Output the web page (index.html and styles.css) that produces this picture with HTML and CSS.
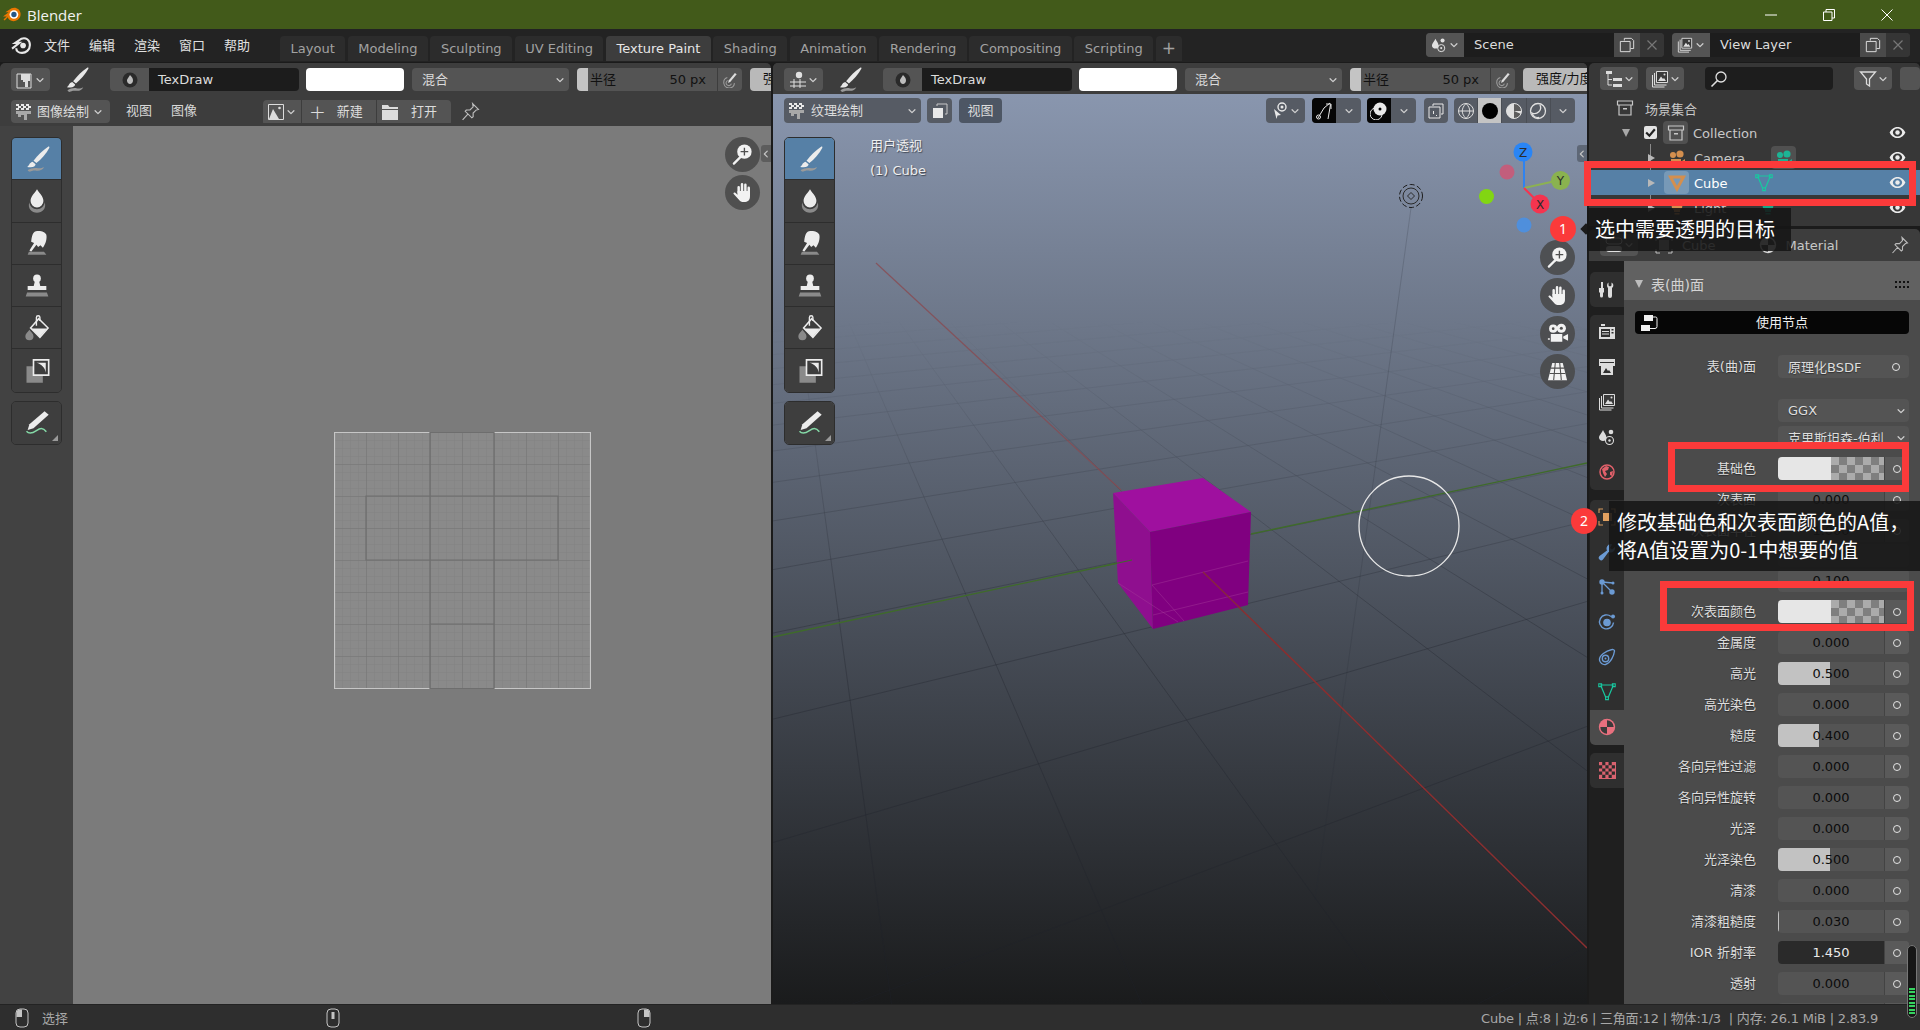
FILE: index.html
```html
<!DOCTYPE html>
<html lang="zh-CN">
<head>
    <meta charset="UTF-8">
    <title>Blender</title>
    <link rel="stylesheet" href="styles.css">
</head>
<body>
    <!-- icon sheet -->
    <svg class="icon-defs" xmlns="http://www.w3.org/2000/svg">
        <symbol id="i-brush" viewBox="0 0 24 24"><path d="M21.500 1.500c.8-.4 1.400.2 1 1C20 7.500 15.500 12 11.500 15.500L9 13.500C12.500 9 17 4.500 21.500 1.500z"/><path d="M8.200 14.300l2.600 2.200c-.3 2-2.500 3.200-7.300 2.300 2-1 1.500-3.500 4.700-4.500z"/><path fill="#9a9a9a" d="M4 21.500c2.500-1.500 5.500-2.200 8-1.700 2 .4 4.500 0 6-1-.8 2.500-4 3.600-6.500 3.200-2.500-.4-4.500.4-5.500 1-.8 0-1.700-.7-2-1.500z"/></symbol>
        <symbol id="i-drop" viewBox="0 0 24 24"><path d="M12 2c2 3.500 5.500 6 5.500 10a5.500 5.500 0 0 1-11 0C6.500 8 10 5.500 12 2z"/><path fill="#8a8a8a" d="M5.500 13c-2 5 2 9 6.500 9s8.500-4 6.500-9c-.3 3.500-3 6-6.500 6s-6.200-2.500-6.500-6z"/></symbol>
        <symbol id="i-smear" viewBox="0 0 24 24"><path d="M11 2c3-1 8 0 9 3 .7 3-.5 8-3 11l-2-2-2 1.500-1.500-2L7 19.500 5.500 18.500l4-6.500-2.500-1C7.500 7 8 3 11 2z"/><path fill="#8a8a8a" d="M5 19.500h13l2 2.500H4z"/></symbol>
        <symbol id="i-stamp" viewBox="0 0 24 24"><circle cx="12" cy="5.500" r="3.300"/><path d="M10 8.500h4l.8 3.500H20v3.500H4V12h5.200z"/><path fill="#8a8a8a" d="M3.500 17.500h17l1.200 3.500H2.300z"/></symbol>
        <symbol id="i-fill" viewBox="0 0 24 24"><path fill="none" stroke="currentColor" stroke-width="1.300" d="M13.500 4l8 8-7 8-8-8z"/><path d="M7 12.500h13.500L14.500 19.500z"/><path fill="none" stroke="currentColor" stroke-width="1.200" d="M11.500 10V3a1.500 1.500 0 0 1 3 0v3"/><path fill="#8a8a8a" d="M5.500 13.500c1.500 2.200 3.500 3.500 3.500 5.500a3.500 3.500 0 0 1-7 0c0-2 2-3.300 3.500-5.500z"/></symbol>
        <symbol id="i-mask" viewBox="0 0 24 24"><path fill="#8a8a8a" d="M3 8h14v14H3z"/><path fill="#3d3d3d" stroke="currentColor" stroke-width="1.400" d="M9 2.500h13v13H9z"/><path d="M11.500 5h8v8.500c-.5-4-3.500-7.500-8-8.500z"/></symbol>
        <symbol id="i-annotate" viewBox="0 0 24 24"><path d="M18.500 2l3.500 3L9 16.500l-5 1.500 1.500-5z"/><path fill="none" stroke="#84d8a6" stroke-width="1.300" d="M3 19c2.500 3 5.500 1.500 8.500-.5s5.500-3 8.500 1"/></symbol>
        <symbol id="i-zoom" viewBox="0 0 24 24"><path fill="none" stroke="currentColor" stroke-width="2.400" stroke-linecap="round" d="M3 21.500l6.500-6.500"/><circle cx="14" cy="9" r="7.500"/><path fill="none" stroke="#4f4f4f" stroke-width="1.400" d="M14 5v8M10 9h8"/></symbol>
        <symbol id="i-hand" viewBox="0 0 24 24"><path fill="none" stroke="currentColor" stroke-width="2.600" stroke-linecap="round" d="M8 12V6.500M11.500 11V3.500M15 11V4M18.500 12.500V7"/><path d="M6.800 10.500h13v6c0 3.500-2.500 5.500-6 5.500-3 0-4.500-1-6-3l-5-5.500c-.8-1.200.7-2.200 1.700-1.200l2.300 2z"/></symbol>
        <symbol id="i-camera" viewBox="0 0 24 24"><circle cx="7.500" cy="7" r="4.300"/><circle cx="16" cy="6.500" r="4.800"/><circle cx="7.500" cy="7" r="1.400" fill="#4f4f4f"/><circle cx="16" cy="6.500" r="1.600" fill="#4f4f4f"/><path d="M5 12.500h12v8H5zM18 15l5-2.500v7L18 17zM2 17h2v1.500H2z"/></symbol>
        <symbol id="i-floor" viewBox="0 0 24 24"><path d="M6.500 3h11L22 21H2z"/><path fill="none" stroke="#4f4f4f" stroke-width="1.100" d="M5 8.500h14M3.700 14h16.600M9.700 3L8 21M14.300 3L16 21"/></symbol>
        <symbol id="i-chev" viewBox="0 0 12 12"><path fill="none" stroke="currentColor" stroke-width="1.500" stroke-linecap="round" stroke-linejoin="round" d="M2.500 4.500L6 8l3.500-3.500"/></symbol>
        <symbol id="i-paintmode" viewBox="0 0 18 18"><path fill="none" stroke="currentColor" stroke-width="1" d="M1 3h14v14H1z"/><path d="M5 3h9v7h-2v6H9v-5H7v-2H5z"/></symbol>
        <symbol id="i-checkmode" viewBox="0 0 18 18"><path fill="#e8e8e8" d="M1 1h3v2H1zm5 0h3v2H6zm5 0h3v2h-3zM3 3h3v2H3zm5 0h3v2H8zm5 0h3v2h-3zM1 5h3v2H1zm5 0h3v2H6zm5 0h3v2h-3z"/><path fill="#a8a8a8" d="M1 8h15v3h-4v6H9v-5H6v2H3v-3H1z"/></symbol>
        <symbol id="i-imgsmall" viewBox="0 0 18 18"><path fill="none" stroke="currentColor" d="M1.500 1.500h15v15h-15z"/><path d="M6 6l6 10H2z"/><circle cx="12.500" cy="5" r="1.300"/></symbol>
        <symbol id="i-folder" viewBox="0 0 18 18"><path d="M1 2h6l1.500 2H17v2H1zM1 7h16v10H1z"/></symbol>
        <symbol id="i-pin" viewBox="0 0 18 18"><path fill="none" stroke="currentColor" stroke-width="1.100" d="M11 1.500l5.500 5.500-2 .5-3 3 0 3.500-1.200 1L4 8.800l1-1.200h3.500l3-3zM6.500 11.500L1.500 17"/></symbol>
        <symbol id="i-pen" viewBox="0 0 18 18"><path d="M14.500 1l2 1.500L9.500 11 7 12.500l.5-3z"/><path fill="none" stroke="#9a9a9a" stroke-width="1.200" d="M6 6.300A6 6 0 1 0 14 12.500M6.500 9.500A3 3 0 1 0 10.500 13"/></symbol>
        <symbol id="i-disc" viewBox="0 0 16 16"><circle cx="8" cy="8" r="7.500" fill="#2a2a2a"/><path fill="#bdbdbd" d="M8 3c2 2 3 3.500 3 5.500S9.500 12 8 12s-3-1.500-3-3.500C5 7 6.500 5.500 8 3z"/></symbol>
        <symbol id="i-scene" viewBox="0 0 18 18"><path d="M5 2c1 2.500 3.500 5 3.500 7.500S7 13 5 13 1 11.500 1 9.500 4 4.500 5 2z"/><circle cx="13" cy="4" r="2.300"/><circle cx="11.500" cy="12.500" r="4" fill="none" stroke="currentColor" stroke-width="1.100"/><circle cx="11.500" cy="12.500" r="1.200"/></symbol>
        <symbol id="i-layers" viewBox="0 0 18 18"><path fill="none" stroke="currentColor" stroke-width="1" d="M1.500 5v12h12M3.500 3v12h12"/><path fill="#3a3a3a" stroke="currentColor" d="M5.500 1.500h11v11h-11z"/><path d="M7 11l3-4.500 2 2.500 1-1 2 3z"/><circle cx="13.500" cy="4.500" r="1"/></symbol>
        <symbol id="i-copy" viewBox="0 0 18 18"><path fill="none" stroke="currentColor" stroke-width="1.100" d="M6 4V1.500h8l2.500 2.500v9H13M1.500 5h11v11.500h-11z"/></symbol>
        <symbol id="i-x" viewBox="0 0 12 12"><path fill="none" stroke="currentColor" stroke-width="1.200" d="M1.500 1.500l9 9M10.500 1.500l-9 9"/></symbol>
        <symbol id="i-tree" viewBox="0 0 18 18"><path d="M1 1h6v3H1zM8 8h9v3H8zM8 14h9v3H8z"/><path fill="none" stroke="currentColor" d="M3 4v11h4M3 9.500h4"/></symbol>
        <symbol id="i-search" viewBox="0 0 18 18"><circle cx="11" cy="7" r="5" fill="none" stroke="currentColor" stroke-width="1.300"/><path fill="none" stroke="currentColor" stroke-width="1.600" d="M7.500 10.500l-6 6"/></symbol>
        <symbol id="i-filter" viewBox="0 0 18 18"><path fill="none" stroke="currentColor" stroke-width="1.300" d="M1.500 2h15l-6 7v7l-3-2V9z"/></symbol>
        <symbol id="i-eye" viewBox="0 0 18 14"><path d="M9 1c4 0 7 2.700 8.500 6C16 10.300 13 13 9 13s-7-2.700-8.500-6C2 3.700 5 1 9 1zm0 1.600C6.200 2.600 4 4.800 4 7s2.200 4.400 5 4.400 5-2.200 5-4.400-2.200-4.400-5-4.400z"/><circle cx="9" cy="7" r="2.400"/></symbol>
        <symbol id="i-box" viewBox="0 0 18 18"><path fill="none" stroke="currentColor" stroke-width="1.200" d="M1.500 2h15v4h-15zM3 6v10h12V6"/><path d="M7 9h4v1.400H7z"/></symbol>
        <symbol id="i-cam-o" viewBox="0 0 18 18"><circle cx="5" cy="6" r="3"/><circle cx="12" cy="5" r="3.600"/><path d="M3 10h10v6H3zM14 12l3-2v6l-3-2z"/></symbol>
        <symbol id="i-cube-o" viewBox="0 0 18 18"><path fill="none" stroke="currentColor" stroke-width="3" d="M2.500 3h13L9 15z"/></symbol>
        <symbol id="i-mesh" viewBox="0 0 18 18"><path fill="none" stroke="currentColor" stroke-width="1.200" d="M2 2h14M3 3l5 12M15 3l-5 12"/><path fill="none" stroke="currentColor" stroke-width="1.100" d="M.8.8h2.800v2.800H.8zM14.400.8h2.800v2.800h-2.800zM7.600 13.800h2.800v2.800H7.600z"/></symbol>
        <symbol id="i-light-o" viewBox="0 0 18 18"><path d="M9 1a5.500 5.500 0 0 1 3 10v2H6v-2A5.500 5.500 0 0 1 9 1zM6.500 14h5v1.500h-5z"/></symbol>
        <symbol id="i-tools" viewBox="0 0 18 18"><path d="M3 1h2v6h1v4l-1 1v3a1.500 1.500 0 0 1-3 0v-3l-1-1V7h2z"/><path d="M10.500 1.500v3l1.500 1 1.500-1v-3c2 .8 2.500 3.500 1 5l-.5.500V15a2 2 0 0 1-4 0V7c-1.500-1.500-1-4.700.5-5.500z"/></symbol>
        <symbol id="i-render" viewBox="0 0 18 18"><path d="M1 4h16v12H1zM3 1h4v2H3z"/><path fill="#2f2f2f" d="M3 6h9v8H3zM13.500 6h2v1.500h-2zM13.500 9h2v1.500h-2z"/><path d="M4 8h7v1H4zM4 10.500h7v1H4z"/></symbol>
        <symbol id="i-output" viewBox="0 0 18 18"><path d="M1 1h16v5h-1v-2H2v2H1z"/><path d="M1 5h16v3H1z"/><path d="M3 7h12v10H3z"/><path fill="#2f2f2f" d="M5 15l3-5 2 3 1-1 2 3z"/></symbol>
        <symbol id="i-world" viewBox="0 0 18 18"><circle cx="9" cy="9" r="7" fill="none" stroke="currentColor" stroke-width="1.500"/><path d="M4 6l4-3 3 1-1 3-3 1 2 3-2 3-2-4zM12 9l3-1-1 5-2-1z"/></symbol>
        <symbol id="i-object" viewBox="0 0 18 18"><path fill="none" stroke="#d89a5c" stroke-width="1.100" d="M1 5V1h4M13 1h4v4M17 13v4h-4M5 17H1v-4"/><path fill="#e0a060" d="M5 5h9v8H5z"/></symbol>
        <symbol id="i-wrench" viewBox="0 0 18 18"><path d="M13 1a4.500 4.500 0 0 0-4 6.500L1.500 13a2.400 2.400 0 0 0 3.500 3.500L10.500 9A4.500 4.500 0 0 0 17 4l-3 2.500L12 5l2-3.500c-.4-.3-.6-.5-1-.5z"/></symbol>
        <symbol id="i-particle" viewBox="0 0 18 18"><circle cx="4" cy="4" r="2.700"/><circle cx="15" cy="5" r="1.500"/><circle cx="14" cy="14" r="2.700"/><circle cx="4" cy="15" r="1.500"/><path fill="none" stroke="currentColor" stroke-width="1.300" d="M4 4v11M4 4l10 10M4 4l11 1"/></symbol>
        <symbol id="i-physics" viewBox="0 0 18 18"><path fill="none" stroke="currentColor" stroke-width="1.400" d="M13 3.500a7 7 0 1 0 2.500 6"/><circle cx="9" cy="9.500" r="3.800"/><circle cx="15" cy="3.500" r="2"/></symbol>
        <symbol id="i-constraint" viewBox="0 0 18 18"><path fill="none" stroke="currentColor" stroke-width="1.400" d="M14 1.500C8 3 1 7 1.500 12c.5 3 3 5 6 4.500C13 15 16 7 16.500 3c0-1-1.500-1.800-2.500-1.500z"/><circle cx="7.500" cy="10.500" r="3.200" fill="none" stroke="currentColor" stroke-width="1.400"/><circle cx="7.500" cy="10.500" r="1"/></symbol>
        <symbol id="i-material" viewBox="0 0 18 18"><circle cx="9" cy="9" r="8.200"/><path fill="#3a3a3a" d="M9 9V2.300A6.700 6.700 0 0 1 15.700 9zM9 9v6.700A6.700 6.700 0 0 1 2.300 9z"/></symbol>
        <symbol id="i-checker" viewBox="0 0 16 16"><path fill="#d9626f" d="M0 0h16v16H0z"/><path fill="#2b2b2b" d="M3 0h3v3H3zm6 0h3v3H9zM0 3h3v3H0zm6 0h3v3H6zm6 0h3v3h-3zM3 6h3v3H3zm6 0h3v3H9zM0 9h3v3H0zm6 0h3v3H6zm6 0h3v3h-3zM3 12h3v3H3zm6 0h3v3H9z"/></symbol>
        <symbol id="i-nodes" viewBox="0 0 18 18"><path d="M4 1h9v6H4zM1 11h9v6H1z"/><path fill="none" stroke="currentColor" d="M13 3h2.500a1.500 1.500 0 0 1 1.500 1.500v8a2 2 0 0 1-2 2h-5"/></symbol>
        <symbol id="i-mouse-l" viewBox="0 0 14 20"><rect x="1" y="1" width="12" height="18" rx="4" fill="none" stroke="currentColor"/><path fill="#c4c4c4" d="M1.500 9V5a3.500 3.500 0 0 1 3.500-3.500h2V9z"/></symbol>
        <symbol id="i-mouse-m" viewBox="0 0 14 20"><rect x="1" y="1" width="12" height="18" rx="4" fill="none" stroke="currentColor"/><rect x="5.500" y="4" width="3" height="7" fill="#c4c4c4"/></symbol>
        <symbol id="i-mouse-r" viewBox="0 0 14 20"><rect x="1" y="1" width="12" height="18" rx="4" fill="none" stroke="currentColor"/><path fill="#c4c4c4" d="M12.500 9V5A3.500 3.500 0 0 0 9 1.500H7V9z"/></symbol>
    </svg>

    <div class="titlebar">
        <svg class="title-logo" viewBox="0 0 20 20"><path fill="#ea7600" d="M0 12l6-4.500H2.500L9 3.500C13 1.500 18 4 18.500 9c.4 5-3.500 8-7.500 8-3 0-5.500-1.500-6-4l-3 3c-1 .5-1.600-.500-1-1.200L4 12z"/><circle cx="11.500" cy="10" r="4.600" fill="#fff"/><circle cx="11.500" cy="10" r="2.800" fill="#265787"/></svg>
        <span class="title-text">Blender</span>
        <div class="win-controls">
            <svg viewBox="0 0 12 12"><path d="M0 6h12" stroke="#fff"/></svg>
            <svg viewBox="0 0 12 12"><path d="M.5 3h8.500v8.500H.5zM3 3V.5h8.500V9H9" fill="none" stroke="#fff"/></svg>
            <svg viewBox="0 0 12 12"><path d="M.5.5l11 11M11.500.5l-11 11" stroke="#fff"/></svg>
        </div>
    </div>

    <div class="topbar">
        <svg class="menu-logo" viewBox="0 0 20 20"><path fill="none" stroke="#e8e8e8" stroke-width="2" d="M1 13l7-5.500H4L10 3.500c4-1.500 8 1 8 6s-4 7.500-7.500 7.500-5.500-2-5.500-4.500"/><circle cx="11.500" cy="10" r="2.700" fill="#e8e8e8"/></svg>
        <nav class="menu">
            <span>文件</span><span>编辑</span><span>渲染</span><span>窗口</span><span>帮助</span>
        </nav>
        <div class="tabs">
            <span class="tab">Layout</span>
            <span class="tab">Modeling</span>
            <span class="tab">Sculpting</span>
            <span class="tab">UV Editing</span>
            <span class="tab active">Texture Paint</span>
            <span class="tab">Shading</span>
            <span class="tab">Animation</span>
            <span class="tab">Rendering</span>
            <span class="tab">Compositing</span>
            <span class="tab">Scripting</span>
            <span class="tab plus">+</span>
        </div>
        <div class="selector first">
            <div class="sel-icon"><svg class="ic16"><use href="#i-scene"/></svg><svg class="chev"><use href="#i-chev"/></svg></div>
            <div class="sel-input">Scene</div>
            <div class="sel-copy"><svg class="ic16"><use href="#i-copy"/></svg></div>
            <div class="sel-x"><svg class="ic12"><use href="#i-x"/></svg></div>
        </div>
        <div class="selector">
            <div class="sel-icon"><svg class="ic16"><use href="#i-layers"/></svg><svg class="chev"><use href="#i-chev"/></svg></div>
            <div class="sel-input">View Layer</div>
            <div class="sel-copy"><svg class="ic16"><use href="#i-copy"/></svg></div>
            <div class="sel-x"><svg class="ic12"><use href="#i-x"/></svg></div>
        </div>
    </div>

    <div class="main">
        <!-- image editor -->
        <section class="editor image-editor">
            <div class="tool-header">
                <div class="btn mode"><svg class="ic18"><use href="#i-paintmode"/></svg><svg class="chev"><use href="#i-chev"/></svg></div>
                <svg class="brush-ic"><use href="#i-brush"/></svg>
                <div class="datablock"><div class="db-icon"><svg class="ic16"><use href="#i-disc"/></svg></div><div class="db-input">TexDraw</div></div>
                <div class="swatch"></div>
                <div class="btn blend"><span>混合</span><svg class="chev"><use href="#i-chev"/></svg></div>
                <div class="radius"><i class="radius-fill"></i><span>半径</span><span class="radius-val">50 px</span></div>
                <div class="btn pen"><svg class="ic16"><use href="#i-pen"/></svg></div>
                <div class="strength">强度/力度</div>
            </div>
            <div class="image-row">
                <div class="btn img-mode"><svg class="ic18"><use href="#i-checkmode"/></svg><span>图像绘制</span><svg class="chev"><use href="#i-chev"/></svg></div>
                <span class="menu-text view">视图</span>
                <span class="menu-text img">图像</span>
                <div class="img-group">
                    <div class="btn g-img"><svg class="ic18"><use href="#i-imgsmall"/></svg><svg class="chev"><use href="#i-chev"/></svg></div>
                    <div class="btn g-new"><span class="plus-sign">+</span><span>新建</span></div>
                    <div class="btn g-open"><svg class="ic18"><use href="#i-folder"/></svg><span>打开</span></div>
                </div>
                <svg class="pin-ic"><use href="#i-pin"/></svg>
            </div>
            <div class="image-body">
                <div class="shelf-col">
                    <div class="shelf">
                        <div class="tool active"><svg><use href="#i-brush"/></svg></div>
                        <div class="tool"><svg><use href="#i-drop"/></svg></div>
                        <div class="tool"><svg><use href="#i-smear"/></svg></div>
                        <div class="tool"><svg><use href="#i-stamp"/></svg></div>
                        <div class="tool"><svg><use href="#i-fill"/></svg></div>
                        <div class="tool"><svg><use href="#i-mask"/></svg></div>
                    </div>
                    <div class="shelf single"><div class="tool"><svg><use href="#i-annotate"/></svg><i class="corner"></i></div></div>
                </div>
                <div class="image-canvas">
                    <svg class="uv" viewBox="0 0 257 257">
                        <defs>
                            <pattern id="minor" width="8" height="8" patternUnits="userSpaceOnUse"><path d="M8 0H0V8" fill="none" stroke="#818181" stroke-width="1"/></pattern>
                            <pattern id="major" width="32" height="32" patternUnits="userSpaceOnUse"><path d="M32 0H0V32" fill="none" stroke="#747474" stroke-width="1"/></pattern>
                        </defs>
                        <rect width="257" height="257" fill="#8a8a8a"/>
                        <rect width="257" height="257" fill="url(#minor)"/>
                        <rect width="257" height="257" fill="url(#major)"/>
                        <path d="M96 .5H.5v256H96M160 .5h96.500v256H160" fill="none" stroke="#c6c6c6" stroke-width="1.200"/>
                        <path d="M96 .5h64v256H96zM32 64h192v64H32zM96 192h64" fill="none" stroke="#6e6e6e" stroke-width="1.200"/>
                    </svg>
                    <div class="nav-gizmos">
                        <div class="nav-btn"><svg><use href="#i-zoom"/></svg></div>
                        <div class="nav-btn"><svg><use href="#i-hand"/></svg></div>
                    </div>
                    <div class="side-arrow"><svg class="ic12"><use href="#i-chev"/></svg></div>
                </div>
            </div>
        </section>

        <!-- 3d viewport -->
        <section class="editor viewport">
            <div class="tool-header">
                <div class="btn mode"><svg class="ic18" viewBox="0 0 18 18"><path d="M1 11h16M1 15h16M5 8v9M11 8v9" stroke="#e0e0e0" fill="none"/><circle cx="10" cy="4" r="3.200" fill="#e0e0e0"/></svg><svg class="chev"><use href="#i-chev"/></svg></div>
                <svg class="brush-ic"><use href="#i-brush"/></svg>
                <div class="datablock"><div class="db-icon"><svg class="ic16"><use href="#i-disc"/></svg></div><div class="db-input">TexDraw</div></div>
                <div class="swatch"></div>
                <div class="btn blend"><span>混合</span><svg class="chev"><use href="#i-chev"/></svg></div>
                <div class="radius"><i class="radius-fill"></i><span>半径</span><span class="radius-val">50 px</span></div>
                <div class="btn pen"><svg class="ic16"><use href="#i-pen"/></svg></div>
                <div class="strength">强度/力度</div>
            </div>
            <div class="view-body">
                <svg class="scene" id="scene" viewBox="773 94 814 910">
                    <defs>
                        <linearGradient id="gridFade" gradientUnits="userSpaceOnUse" x1="0" y1="320" x2="0" y2="640">
                            <stop offset="0" stop-color="#000"/><stop offset="1" stop-color="#fff"/>
                        </linearGradient>
                        <mask id="gridMask" maskUnits="userSpaceOnUse" x="773" y="94" width="814" height="910"><rect x="773" y="94" width="814" height="910" fill="url(#gridFade)"/></mask>
                    </defs>
                    <g id="floor" mask="url(#gridMask)" stroke="#20242c" stroke-opacity=".34" stroke-width="1"></g>
                    <path d="M1411 208L1350 650L1315 900" fill="none" stroke="#2a2e36" stroke-opacity=".2"/>
                    <path d="M876 263L1121 490" stroke="#8a4a50" stroke-width="1.200" stroke-opacity=".8"/>
                    <path d="M1203 572L1587 948" stroke="#8b2f30" stroke-width="1.500"/>
                    <path d="M773 637L1132 560" stroke="#3f6b2a" stroke-width="1.300"/>
                    <path d="M1251 534L1587 463" stroke="#3f6b2a" stroke-width="1.300"/>
                    <path d="M1113 493L1203 478L1251 512L1150 532z" fill="#9f109f"/>
                    <path d="M1113 493L1150 532L1153 629L1118 583z" fill="#8f0f8f"/>
                    <path d="M1150 532L1251 512L1248 605L1153 629z" fill="#800080"/>
                    <path d="M1152 585L1248 561M1153 615L1248 592M1118 583L1178 622M1152 585L1184 621" stroke="#a33a9a" stroke-opacity=".45"/>
                    <path d="M1203 572L1240 608" stroke="#8b2f30" stroke-width="1.500" opacity=".8"/>
                    <path d="M1132 560L1104 566" stroke="#3f6b2a"/>
                    <circle cx="1409" cy="526" r="50" fill="none" stroke="#e8e8e8" stroke-width="1.300"/>
                    <circle cx="1411" cy="196" r="11.500" fill="none" stroke="#1c1c1c" stroke-dasharray="5 2.500"/>
                    <circle cx="1411" cy="196" r="8" fill="none" stroke="#2a2a2a"/>
                    <path d="M1411 192.500l3.500 3.500-3.500 3.500-3.500-3.500z" fill="none" stroke="#2a2a2a"/>
                    <path d="M1524 152V188" stroke="#2f83f0" stroke-width="2"/>
                    <path d="M1524 188L1560 180" stroke="#8cb152" stroke-width="2"/>
                    <path d="M1524 188L1540 204" stroke="#f5344f" stroke-width="2"/>
                    <circle cx="1507" cy="172" r="7.500" fill="#c25e7c"/>
                    <circle cx="1486.500" cy="196.500" r="7.500" fill="#82d612"/>
                    <circle cx="1524" cy="225" r="7.500" fill="#4f8fdc"/>
                    <circle cx="1523" cy="152" r="9.500" fill="#2a85f5"/>
                    <circle cx="1560.500" cy="180.500" r="9.500" fill="#8ab24f"/>
                    <circle cx="1540" cy="204" r="9.500" fill="#f5344f"/>
                    <text class="axis" x="1523" y="156.500">Z</text>
                    <text class="axis" x="1560.500" y="185">Y</text>
                    <text class="axis" x="1540" y="208.500">X</text>
                </svg>
                <div class="view-header">
                    <div class="vbtn v-mode"><svg class="ic18"><use href="#i-checkmode"/></svg><span>纹理绘制</span><svg class="chev"><use href="#i-chev"/></svg></div>
                    <div class="vbtn v-small"><svg class="ic16" viewBox="0 0 16 16"><path fill="#e8e8e8" d="M1 5h10v10H1z"/><path fill="none" stroke="#c8c8c8" d="M5 3V1h10v10h-2"/></svg></div>
                    <div class="vbtn v-view">视图</div>
                    <div class="vbtn v-select"><svg class="ic18" viewBox="0 0 18 18"><circle cx="11" cy="5" r="4" fill="none" stroke="#e8e8e8" stroke-width="1.400"/><circle cx="11" cy="5" r="1.500" fill="#e8e8e8"/><path d="M3 7l7 6-3.500.5L5.500 17z" fill="#e8e8e8"/></svg><svg class="chev"><use href="#i-chev"/></svg></div>
                    <div class="v-pair overlay">
                        <div class="v-black"><svg class="ic18" viewBox="0 0 18 18"><path d="M15 1L9 6 3 16" fill="none" stroke="#e8e8e8"/><circle cx="3.500" cy="15" r="2" fill="none" stroke="#e8e8e8"/><path d="M11 2h5v5M15.500 2.500L13 17" fill="none" stroke="#e8e8e8"/></svg></div>
                        <div class="v-arrow"><svg class="chev"><use href="#i-chev"/></svg></div>
                    </div>
                    <div class="v-pair shading">
                        <div class="v-black"><svg class="ic18" viewBox="0 0 18 18"><circle cx="10" cy="7" r="6.500" fill="#e8e8e8"/><circle cx="10" cy="7" r="1.500" fill="#000"/><path d="M5 6a6 6 0 1 0 7 7" fill="none" stroke="#e8e8e8"/></svg></div>
                        <div class="v-arrow"><svg class="chev"><use href="#i-chev"/></svg></div>
                    </div>
                    <div class="vbtn v-xray"><svg class="ic16" viewBox="0 0 16 16"><path fill="none" stroke="#e8e8e8" d="M5 3V1h10v10h-2M1 4h11v11H1z"/><path d="M5 8h1v3H5zM8 12h1v1H8z" fill="#e8e8e8"/></svg></div>
                    <div class="shade-group">
                        <div class="shade"><svg class="ic18" viewBox="0 0 18 18"><circle cx="9" cy="9" r="7.500" fill="none" stroke="#ddd"/><path d="M1.500 9h15M9 1.500c-5 5-5 10 0 15M9 1.500c5 5 5 10 0 15" fill="none" stroke="#ddd"/></svg></div>
                        <div class="shade on"><svg class="ic18" viewBox="0 0 18 18"><circle cx="9" cy="9" r="8" fill="#000"/></svg></div>
                        <div class="shade"><svg class="ic18" viewBox="0 0 18 18"><circle cx="9" cy="9" r="7.500" fill="#e0e0e0"/><path d="M9 9V1.500a7.500 7.500 0 0 1 7.500 7.500zM9 9l7 3a7.500 7.500 0 0 1-7 4.500z" fill="#5d5d5d"/><circle cx="9" cy="9" r="7.500" fill="none" stroke="#e0e0e0"/></svg></div>
                        <div class="shade"><svg class="ic18" viewBox="0 0 18 18"><circle cx="9" cy="9" r="7.500" fill="none" stroke="#e0e0e0" stroke-width="1.300"/><path d="M11 3a6 6 0 0 1-8 8c1 3 4 5 7 4.500" fill="none" stroke="#e0e0e0" stroke-width="1.300"/></svg></div>
                        <div class="shade"><svg class="chev"><use href="#i-chev"/></svg></div>
                    </div>
                </div>
                <div class="shelf-col in-view">
                    <div class="shelf">
                        <div class="tool active"><svg><use href="#i-brush"/></svg></div>
                        <div class="tool"><svg><use href="#i-drop"/></svg></div>
                        <div class="tool"><svg><use href="#i-smear"/></svg></div>
                        <div class="tool"><svg><use href="#i-stamp"/></svg></div>
                        <div class="tool"><svg><use href="#i-fill"/></svg></div>
                        <div class="tool"><svg><use href="#i-mask"/></svg></div>
                    </div>
                    <div class="shelf single"><div class="tool"><svg><use href="#i-annotate"/></svg><i class="corner"></i></div></div>
                </div>
                <div class="view-info"><div>用户透视</div><div>(1) Cube</div></div>
                <div class="nav-gizmos view-nav">
                    <div class="nav-btn"><svg><use href="#i-zoom"/></svg></div>
                    <div class="nav-btn"><svg><use href="#i-hand"/></svg></div>
                    <div class="nav-btn"><svg><use href="#i-camera"/></svg></div>
                    <div class="nav-btn"><svg><use href="#i-floor"/></svg></div>
                </div>
                <div class="side-arrow view-arrow"><svg class="ic12"><use href="#i-chev"/></svg></div>
            </div>
        </section>

        <!-- outliner + properties -->
        <div class="right-col">
            <section class="editor outliner">
                <div class="ol-header">
                    <div class="btn ol-btn"><svg class="ic18"><use href="#i-tree"/></svg><svg class="chev"><use href="#i-chev"/></svg></div>
                    <div class="btn ol-btn second"><svg class="ic18"><use href="#i-layers"/></svg><svg class="chev"><use href="#i-chev"/></svg></div>
                    <div class="ol-search"><svg class="ic18"><use href="#i-search"/></svg></div>
                    <div class="btn ol-btn"><svg class="ic18"><use href="#i-filter"/></svg><svg class="chev"><use href="#i-chev"/></svg></div>
                    <div class="btn ol-stub"></div>
                </div>
                <div class="ol-tree">
                    <i class="tree-line"></i>
                    <div class="ol-row root"><svg class="ic18"><use href="#i-box"/></svg><span class="ol-name">场景集合</span></div>
                    <div class="ol-row coll">
                        <i class="tri-down"></i>
                        <span class="check"><svg viewBox="0 0 12 12"><path d="M2 6l3 3 5-6" fill="none" stroke="#222" stroke-width="2"/></svg></span>
                        <span class="ol-icon on"><svg class="ic18"><use href="#i-box"/></svg></span>
                        <span class="ol-name">Collection</span>
                        <svg class="eye"><use href="#i-eye"/></svg>
                    </div>
                    <div class="ol-row obj">
                        <i class="tri-right"></i>
                        <span class="ol-icon orange"><svg class="ic18"><use href="#i-cam-o"/></svg></span>
                        <span class="ol-name">Camera</span>
                        <span class="ol-data cam"><svg class="ic18"><use href="#i-cam-o"/></svg></span>
                        <svg class="eye"><use href="#i-eye"/></svg>
                    </div>
                    <div class="ol-row obj selected">
                        <i class="tri-right"></i>
                        <span class="ol-icon orange lit"><svg class="ic18"><use href="#i-cube-o"/></svg></span>
                        <span class="ol-name">Cube</span>
                        <svg class="ic18 mesh-ic"><use href="#i-mesh"/></svg>
                        <svg class="eye"><use href="#i-eye"/></svg>
                    </div>
                    <div class="ol-row obj">
                        <i class="tri-right"></i>
                        <span class="ol-icon orange"><svg class="ic18"><use href="#i-light-o"/></svg></span>
                        <span class="ol-name">Light</span>
                        <svg class="ic18 light-ic"><use href="#i-light-o"/></svg>
                        <svg class="eye"><use href="#i-eye"/></svg>
                    </div>
                </div>
            </section>

            <section class="editor properties">
                <div class="prop-header">
                    <div class="btn prop-type"><svg class="ic18" viewBox="0 0 18 18"><rect x="1" y="2" width="16" height="6" rx="3" fill="none" stroke="#e0e0e0"/><rect x="1" y="10" width="16" height="6" rx="3" fill="#e0e0e0"/></svg><svg class="chev"><use href="#i-chev"/></svg></div>
                    <svg class="ic18 crumb-obj" viewBox="0 0 18 18"><path fill="none" stroke="#c0c0c0" d="M1 5V1h4M13 1h4v4M17 13v4h-4M5 17H1v-4"/><path fill="#9a9a9a" d="M4 4h10v10H4z"/></svg>
                    <span class="crumb">Cube</span>
                    <svg class="ic18 crumb-mat"><use href="#i-material"/></svg>
                    <span class="crumb">Material</span>
                    <svg class="ic18 crumb-pin"><use href="#i-pin"/></svg>
                </div>
                <div class="prop-body">
                    <div class="prop-nav">
                        <div class="nav-group"><div class="prop-tab white"><svg><use href="#i-tools"/></svg></div></div>
                        <div class="nav-group">
                            <div class="prop-tab white"><svg><use href="#i-render"/></svg></div>
                            <div class="prop-tab white"><svg><use href="#i-output"/></svg></div>
                            <div class="prop-tab white"><svg><use href="#i-layers"/></svg></div>
                            <div class="prop-tab white"><svg><use href="#i-scene"/></svg></div>
                            <div class="prop-tab red"><svg><use href="#i-world"/></svg></div>
                        </div>
                        <div class="nav-group">
                            <div class="prop-tab"><svg><use href="#i-object"/></svg></div>
                            <div class="prop-tab blue"><svg><use href="#i-wrench"/></svg></div>
                            <div class="prop-tab blue"><svg><use href="#i-particle"/></svg></div>
                            <div class="prop-tab blue"><svg><use href="#i-physics"/></svg></div>
                            <div class="prop-tab blue"><svg><use href="#i-constraint"/></svg></div>
                            <div class="prop-tab green"><svg><use href="#i-mesh"/></svg></div>
                            <div class="prop-tab pink active"><svg><use href="#i-material"/></svg></div>
                        </div>
                        <div class="nav-group"><div class="prop-tab"><svg class="checker"><use href="#i-checker"/></svg></div></div>
                    </div>
                    <div class="prop-panel">
                        <div class="panel-head"><i class="tri-down dim"></i><span>表(曲)面</span><i class="grip"></i></div>
                        <div class="nodes-btn"><svg class="ic18"><use href="#i-nodes"/></svg><span>使用节点</span></div>

                        <div class="row gap-big"><label>表(曲)面</label><div class="fld drop"><span>原理化BSDF</span><i class="sock"></i></div></div>
                        <div class="row gap-big tight"><label></label><div class="fld drop"><span>GGX</span><svg class="chev"><use href="#i-chev"/></svg></div></div>
                        <div class="row"><label></label><div class="fld drop"><span>克里斯坦森-伯利</span><svg class="chev"><use href="#i-chev"/></svg></div></div>
                        <div class="row"><label>基础色</label><div class="fld"><i class="color"></i><i class="alpha"></i><b class="fld-end"><i class="sock"></i></b></div></div>
                        <div class="row"><label>次表面</label><div class="fld"><span class="val">0.000</span><b class="fld-end"><i class="sock"></i></b></div></div>
                        <div class="row-group">
                            <div class="row"><label>次表面半径</label><div class="fld"><span class="val">1.000</span><b class="fld-end"><i class="sock"></i></b></div></div>
                            <div class="row"><label></label><div class="fld"><span class="val">0.200</span></div></div>
                            <div class="row"><label></label><div class="fld"><span class="val">0.100</span></div></div>
                        </div>
                        <div class="row"><label>次表面颜色</label><div class="fld"><i class="color"></i><i class="alpha"></i><b class="fld-end"><i class="sock"></i></b></div></div>
                        <div class="row"><label>金属度</label><div class="fld"><span class="val">0.000</span><b class="fld-end"><i class="sock"></i></b></div></div>
                        <div class="row"><label>高光</label><div class="fld"><i class="fill" style="width:52px"></i><span class="val">0.500</span><b class="fld-end"><i class="sock"></i></b></div></div>
                        <div class="row"><label>高光染色</label><div class="fld"><span class="val">0.000</span><b class="fld-end"><i class="sock"></i></b></div></div>
                        <div class="row"><label>糙度</label><div class="fld"><i class="fill" style="width:41px"></i><span class="val">0.400</span><b class="fld-end"><i class="sock"></i></b></div></div>
                        <div class="row"><label>各向异性过滤</label><div class="fld"><span class="val">0.000</span><b class="fld-end"><i class="sock"></i></b></div></div>
                        <div class="row"><label>各向异性旋转</label><div class="fld"><span class="val">0.000</span><b class="fld-end"><i class="sock"></i></b></div></div>
                        <div class="row"><label>光泽</label><div class="fld"><span class="val">0.000</span><b class="fld-end"><i class="sock"></i></b></div></div>
                        <div class="row"><label>光泽染色</label><div class="fld"><i class="fill" style="width:52px"></i><span class="val">0.500</span><b class="fld-end"><i class="sock"></i></b></div></div>
                        <div class="row"><label>清漆</label><div class="fld"><span class="val">0.000</span><b class="fld-end"><i class="sock"></i></b></div></div>
                        <div class="row"><label>清漆粗糙度</label><div class="fld"><i class="fill" style="width:1px"></i><span class="val">0.030</span><b class="fld-end"><i class="sock"></i></b></div></div>
                        <div class="row"><label>IOR 折射率</label><div class="fld dark"><span class="val">1.450</span><b class="fld-end"><i class="sock"></i></b></div></div>
                        <div class="row"><label>透射</label><div class="fld"><span class="val">0.000</span><b class="fld-end"><i class="sock"></i></b></div></div>
                        <div class="row"><label></label><div class="fld"><span class="val"></span><b class="fld-end"></b></div></div>
                    </div>
                </div>
            </section>
        </div>
    </div>

    <div class="statusbar">
        <svg class="mouse"><use href="#i-mouse-l"/></svg><span class="status-label">选择</span>
        <svg class="mouse mid"><use href="#i-mouse-m"/></svg>
        <svg class="mouse right"><use href="#i-mouse-r"/></svg>
        <span class="status-info">Cube | 点:8 | 边:6 | 三角面:12 | 物体:1/3 &nbsp;| 内存: 26.1 MiB | 2.83.9</span>
    </div>

    <!-- annotations on top of the screenshot -->
    <div class="mark box-cube"></div>
    <div class="mark box-base"></div>
    <div class="mark box-sub"></div>
    <div class="badge badge-1">1</div>
    <div class="badge badge-2">2</div>
    <i class="tip-arrow"></i>
    <div class="tip tip-1">选中需要透明的目标</div>
    <div class="tip tip-2">修改基础色和次表面颜色的A值，<br>将A值设置为0-1中想要的值</div>

    <div class="meter"><i></i><i></i><i></i><i></i><i></i><i></i><i></i><i></i></div>

    <script src="viewport.js"></script>
</body>
</html>
```

FILE: styles.css
```css
* {
    box-sizing: border-box;
    margin: 0;
    padding: 0;
}

body {
    font-family: "DejaVu Sans", "Noto Sans CJK SC", sans-serif;
    font-size: 13px;
    color: #d8d8d8;
    background: #1b1b1b;
    width: 1920px;
    height: 1030px;
    overflow: hidden;
    display: flex;
    flex-direction: column;
    position: relative;
}

.icon-defs {
    display: none;
}

svg {
    fill: currentColor;
    display: block;
    flex: none;
}

.ic12 { width: 12px; height: 12px; }
.ic16 { width: 16px; height: 16px; }
.ic18 { width: 18px; height: 18px; }
.chev { width: 10px; height: 10px; color: #cfcfcf; }

/* window title */
.titlebar {
    height: 29px;
    background: #425a1a;
    display: flex;
    align-items: center;
    padding-left: 3px;
    flex: none;
}

.title-logo { width: 19px; height: 19px; }

.title-text {
    font-family: "Open Sans", sans-serif;
    font-size: 15px;
    color: #f2f2f2;
    margin-left: 5px;
}

.win-controls {
    margin-left: auto;
    display: flex;
    gap: 46px;
    padding-right: 27px;
}

.win-controls svg {
    width: 12px;
    height: 12px;
}

/* top bar */
.topbar {
    height: 33px;
    background: #232323;
    display: flex;
    align-items: flex-start;
    padding-left: 11px;
    flex: none;
}

.menu-logo {
    width: 21px;
    height: 21px;
    margin-top: 6px;
}

.menu {
    display: flex;
    gap: 19px;
    margin-left: 12px;
    height: 33px;
    align-items: center;
    color: #e0e0e0;
    padding-bottom: 2px;
}

.tabs {
    display: flex;
    gap: 2.500px;
    margin: 7px 0 0 30px;
}

.tab {
    height: 25px;
    line-height: 25px;
    padding: 0 10.500px;
    background: #2c2c2c;
    color: #a2a2a2;
    border-radius: 4px 4px 0 0;
    white-space: nowrap;
}

.tab.active {
    background: #3d3d3d;
    color: #e6e6e6;
}

.tab.plus {
    padding: 0 6px;
    font-size: 17px;
    color: #a2a2a2;
}

.selector {
    display: flex;
    width: 238px;
    height: 24px;
    margin: 4px 10px 0 8px;
    border-radius: 4px;
    overflow: hidden;
    background: #3a3a3a;
}

.selector.first {
    margin-left: auto;
    margin-right: 0;
}

.sel-icon {
    width: 38px;
    background: #545454;
    display: flex;
    align-items: center;
    justify-content: center;
    gap: 2px;
    color: #e0e0e0;
}

.sel-input {
    width: 150px;
    background: #1d1d1d;
    color: #dcdcdc;
    line-height: 24px;
    padding-left: 10px;
}

.sel-copy {
    width: 26px;
    background: #4a4a4a;
    display: flex;
    align-items: center;
    justify-content: center;
    color: #dcdcdc;
}

.sel-x {
    width: 24px;
    background: #353535;
    display: flex;
    align-items: center;
    justify-content: center;
    color: #777;
}

/* areas */
.main {
    flex: 1;
    display: flex;
    gap: 2px;
    padding-top: 1px;
    min-height: 0;
}

.editor {
    border-radius: 5px 5px 0 0;
    overflow: hidden;
    display: flex;
    flex-direction: column;
}

.image-editor {
    width: 771px;
}

.viewport {
    width: 814px;
    background: #3d3d3d;
}

/* tool settings row, same in both editors */
.tool-header {
    height: 31px;
    padding: 5px 0 0 11px;
    background: #3d3d3d;
    display: flex;
    overflow: hidden;
    flex: none;
}

.btn {
    height: 23px;
    background: #545454;
    border-radius: 4px;
    display: flex;
    align-items: center;
    color: #dcdcdc;
    flex: none;
}

.mode {
    width: 39px;
    justify-content: center;
    gap: 1px;
}

.brush-ic {
    width: 27px;
    height: 27px;
    margin: -2px 0 0 13px;
    color: #e8e8e8;
}

.datablock {
    width: 189px;
    height: 23px;
    margin-left: 20px;
    display: flex;
    border-radius: 4px;
    overflow: hidden;
    flex: none;
}

.db-icon {
    width: 39px;
    background: #545454;
    display: flex;
    align-items: center;
    justify-content: center;
}

.db-input {
    flex: 1;
    background: #1c1c1c;
    color: #dcdcdc;
    line-height: 23px;
    padding-left: 9px;
}

.swatch {
    width: 98px;
    height: 23px;
    margin-left: 7px;
    background: #fff;
    border-radius: 4px;
    flex: none;
}

.blend {
    width: 157px;
    margin-left: 8px;
    padding: 0 4px 0 10px;
    justify-content: space-between;
}

.blend span,
.img-mode span,
.g-new span:last-child,
.g-open span,
.radius span:nth-child(2),
.menu-text,
.v-mode span,
.v-view {
    padding-bottom: 2px;
}

.radius {
    width: 140px;
    height: 23px;
    margin-left: 8px;
    background: #545454;
    border-radius: 4px 0 0 4px;
    display: flex;
    align-items: center;
    color: #111;
    flex: none;
    overflow: hidden;
}

.radius-fill {
    width: 11px;
    height: 23px;
    background: #c4c4c4;
    margin-right: 2px;
}

.radius-val {
    margin-left: auto;
    padding-right: 11px;
}

.pen {
    width: 25px;
    border-radius: 0 4px 4px 0;
    border-left: 1px solid #3d3d3d;
    justify-content: center;
}

.strength {
    width: 120px;
    height: 23px;
    margin-left: 8px;
    background: #b9b9b9;
    border-radius: 4px;
    color: #111;
    line-height: 21px;
    padding-left: 13px;
    white-space: nowrap;
    flex: none;
}

/* image editor row two */
.image-row {
    height: 32px;
    padding: 6px 0 0 11px;
    background: #3d3d3d;
    display: flex;
    flex: none;
}

.img-mode {
    width: 99px;
    padding-left: 4px;
    gap: 4px;
    font-size: 13px;
}

.menu-text {
    line-height: 21px;
}

.menu-text.view { margin-left: 16px; }
.menu-text.img { margin-left: 19px; }

.img-group {
    display: flex;
    margin-left: 66px;
    gap: 1px;
    border-radius: 4px;
    overflow: hidden;
}

.img-group .btn { border-radius: 0; }
.g-img { width: 38px; padding-left: 4px; gap: 1px; }
.g-new { width: 74px; padding-left: 7px; gap: 11px; }
.g-open { width: 74px; padding-left: 4px; gap: 12px; }

.plus-sign {
    font-size: 20px;
    font-weight: 300;
    line-height: 20px;
}

.pin-ic {
    width: 19px;
    height: 19px;
    margin: 2px 0 0 10px;
    color: #bdbdbd;
}

.image-body {
    flex: 1;
    display: flex;
    min-height: 0;
}

/* toolbar column */
.shelf-col {
    width: 73px;
    padding: 11px 11px 0;
    background: #424242;
    flex: none;
    display: flex;
    flex-direction: column;
    gap: 8px;
}

.shelf {
    border: 1px solid #2d2d2d;
    border-radius: 5px;
    overflow: hidden;
    width: 51px;
}

.tool {
    height: 42.300px;
    display: flex;
    align-items: center;
    justify-content: center;
    border-bottom: 1px solid #2d2d2d;
    background: #3e3e3e;
    color: #ececec;
    position: relative;
}

.tool:last-child { border-bottom: 0; }
.tool.active { background: #5680a6; }

.tool svg {
    width: 28px;
    height: 28px;
}

.corner {
    position: absolute;
    right: 3px;
    bottom: 3px;
    border-style: solid;
    border-width: 0 0 6px 6px;
    border-color: transparent transparent #9a9a9a transparent;
}

.image-canvas {
    flex: 1;
    background: #7b7b7b;
    padding: 306px 0 0 261px;
    position: relative;
}

.uv {
    width: 257px;
    height: 257px;
}

.nav-gizmos {
    position: absolute;
    top: 11px;
    left: 652px;
    display: flex;
    flex-direction: column;
    gap: 3px;
}

.nav-btn {
    width: 35px;
    height: 35px;
    border-radius: 50%;
    background: rgba(72, 72, 72, 0.85);
    display: flex;
    align-items: center;
    justify-content: center;
    color: #f2f2f2;
}

.nav-btn svg {
    width: 23px;
    height: 23px;
}

.side-arrow {
    position: absolute;
    right: 0;
    top: 19px;
    width: 10px;
    height: 17px;
    background: #5d5d5d;
    border-radius: 3px 0 0 3px;
    display: flex;
    align-items: center;
    justify-content: center;
    color: #c4c4c4;
}

.side-arrow svg {
    transform: rotate(90deg);
    width: 10px;
    height: 10px;
}

/* 3d viewport */
.view-body {
    flex: 1;
    position: relative;
    background: linear-gradient(#8996ae, #1a1b1c);
    min-height: 0;
}

.scene {
    position: absolute;
    inset: 0;
    width: 814px;
    height: 910px;
}

.axis {
    font-size: 12px;
    text-anchor: middle;
    fill: #2b2b2b;
}

.view-header {
    position: relative;
    height: 29px;
    padding: 4px 12px 0 11px;
    display: flex;
    gap: 6px;
}

.vbtn {
    height: 25px;
    background: #565b64;
    border-radius: 4px;
    display: flex;
    align-items: center;
    justify-content: center;
    color: #dcdcdc;
    flex: none;
}

.v-mode {
    width: 137px;
    justify-content: flex-start;
    padding: 0 4px;
    gap: 5px;
}

.v-mode .chev { margin-left: auto; }
.v-small { width: 25px; }
.v-view { width: 43px; background: #4d5664; margin-left: 1px; margin-right: auto; }
.v-select { width: 39px; gap: 1px; }

.v-pair {
    width: 49px;
    height: 25px;
    display: flex;
    border-radius: 4px;
    overflow: hidden;
    background: #565b64;
    margin-left: 1px;
}

.v-black {
    width: 24px;
    background: #060606;
    display: flex;
    align-items: center;
    justify-content: center;
}

.v-arrow {
    flex: 1;
    display: flex;
    align-items: center;
    justify-content: center;
}

.shading { margin-left: 0; }
.v-xray { width: 24px; margin-left: 2px; }

.shade-group {
    width: 121px;
    height: 25px;
    display: flex;
    border-radius: 4px;
    overflow: hidden;
    background: #565b64;
}

.shade {
    width: 24.200px;
    display: flex;
    align-items: center;
    justify-content: center;
    border-right: 1px solid #4a4e55;
}

.shade.on { background: #c4c4c4; }
.shade:last-child { border-right: 0; }

.shelf-col.in-view {
    position: relative;
    background: none;
    padding-top: 14px;
}

.view-info {
    position: absolute;
    left: 97px;
    top: 39px;
    line-height: 25px;
    font-size: 13px;
    color: #efefef;
    text-shadow: 1px 1px 1px rgba(0, 0, 0, 0.5);
}

.view-nav {
    left: 767px;
    top: 146px;
}

.view-arrow {
    top: 51px;
    background: #5e6776;
}

/* right column */
.right-col {
    flex: 1;
    display: flex;
    flex-direction: column;
    gap: 3px;
    min-width: 0;
}

.outliner {
    height: 163px;
    background: #373737;
    flex: none;
}

.ol-header {
    height: 32px;
    padding: 4px 0 0 11px;
    display: flex;
    overflow: hidden;
    flex: none;
}

.ol-btn {
    width: 38px;
    justify-content: center;
    gap: 1px;
}

.ol-btn.second { margin-left: 8px; }

.ol-search {
    width: 141px;
    height: 23px;
    margin: 0 21px;
    background: #1d1d1d;
    border-radius: 4px;
    display: flex;
    align-items: center;
    padding-left: 5px;
    color: #e0e0e0;
}

.ol-stub {
    width: 20px;
    margin-left: 8px;
}

.ol-tree {
    position: relative;
}

.tree-line {
    position: absolute;
    left: 61px;
    top: 49px;
    width: 1px;
    height: 62px;
    background: #8a8a8a;
}

.ol-row {
    height: 25px;
    display: flex;
    align-items: center;
    position: relative;
    padding-right: 14px;
    color: #c8c8c8;
}

.root {
    padding-left: 27px;
}

.root .ol-name {
    margin-left: 11px;
}

.ol-icon {
    width: 25px;
    height: 23px;
    display: flex;
    align-items: center;
    justify-content: center;
    border-radius: 4px;
    flex: none;
}

.ol-icon.on { background: #505050; }
.ol-icon.orange { color: #d48f4e; }
.ol-icon.lit { background: rgba(255, 255, 255, 0.2); }

.ol-name { margin-left: 5px; padding-top: 2px; }
.selected { background: #5680a6; }
.selected .ol-name { color: #fff; }

.eye {
    width: 17px;
    height: 13px;
    margin-left: auto;
    color: #ececec;
}

.tri-down {
    width: 0;
    height: 0;
    border-style: solid;
    border-width: 8px 4.500px 0;
    border-color: #a8a8a8 transparent transparent;
    flex: none;
}

.coll { padding-left: 33px; }

.check {
    width: 13px;
    height: 13px;
    background: #e4e4e4;
    border-radius: 2px;
    margin: 0 6px 0 14px;
    flex: none;
}

.check svg { width: 13px; height: 13px; }

.tri-right {
    width: 0;
    height: 0;
    border-style: solid;
    border-width: 4px 0 4px 7px;
    border-color: transparent transparent transparent #b8b8b8;
    flex: none;
    margin-right: 9px;
}

.obj { padding-left: 59px; }

.ol-data {
    width: 25px;
    height: 23px;
    background: #505050;
    border-radius: 4px;
    margin-left: 26px;
    display: flex;
    align-items: center;
    justify-content: center;
    color: #1cb495;
}

.mesh-ic { color: #18c8a0; margin-left: 27px; }
.light-ic { color: #18a888; margin-left: 33px; }

/* properties */
.properties {
    flex: 1;
    min-height: 0;
    background: #1f1f1f;
}

.prop-header {
    height: 32px;
    background: #3d3d3d;
    display: flex;
    align-items: center;
    padding-left: 11px;
    flex: none;
    color: #c8c8c8;
}

.prop-type {
    width: 38px;
    height: 22px;
    justify-content: center;
    gap: 1px;
}

.crumb-obj { margin-left: 17px; }
.crumb { margin-left: 9px; }
.crumb-mat { margin-left: 43px; color: #d8d8d8; }
.crumb-pin { margin-left: auto; margin-right: 11px; color: #bbb; }

.prop-body {
    flex: 1;
    display: flex;
    min-height: 0;
}

.prop-nav {
    width: 35px;
    flex: none;
    padding: 11px 0 0 1px;
    background: #1f1f1f;
}

.nav-group {
    margin-bottom: 7.500px;
    border-radius: 5px 0 0 5px;
    overflow: hidden;
}

.nav-group:nth-child(2) { margin-bottom: 10px; }
.nav-group:nth-child(3) { margin-bottom: 8px; }

.prop-tab {
    height: 35px;
    background: #2f2f2f;
    display: flex;
    align-items: center;
    justify-content: center;
    color: #dcdcdc;
}

.prop-tab svg { width: 18px; height: 18px; }
.prop-tab.blue { color: #6b9ad3; }
.prop-tab.red { color: #e0606a; }
.prop-tab.green { color: #18c8a0; }
.prop-tab.pink { color: #e8707e; }
.prop-tab.active { background: #4b4b4b; }
.prop-tab .checker { width: 17px; height: 17px; }

.prop-panel {
    flex: 1;
    background: #4b4b4b;
    overflow: hidden;
    padding-right: 11px;
}

.panel-head {
    height: 39px;
    margin-right: -11px;
    background: #616161;
    display: flex;
    align-items: center;
    padding: 7px 0 0 11px;
    font-size: 14px;
    color: #d4d4d4;
}

.panel-head span { margin-left: 8px; }
.tri-down.dim { border-top-color: #bdbdbd; }

.grip {
    margin-left: auto;
    margin-right: 10px;
    width: 15px;
    height: 7px;
    background: repeating-linear-gradient(90deg, #111 0 2px, transparent 2px 4px) 0 0 / 100% 2px no-repeat,
                repeating-linear-gradient(90deg, #111 0 2px, transparent 2px 4px) 0 5px / 100% 2px no-repeat;
}

.nodes-btn {
    height: 23px;
    margin: 11px 0 21px 11px;
    background: #060606;
    border-radius: 4px;
    display: flex;
    align-items: center;
    justify-content: center;
    position: relative;
    color: #f0f0f0;
    padding: 0 0 2px 20px;
}

.nodes-btn svg {
    position: absolute;
    left: 5px;
    top: 3px;
    color: #f0f0f0;
}

.row {
    height: 23px;
    display: flex;
    margin-bottom: 8px;
    text-shadow: 0 1px 1px rgba(0, 0, 0, 0.4);
}

.row.gap-big { margin-bottom: 21px; }
.row.gap-big.tight { margin-bottom: 4px; }

.row label {
    width: 132px;
    text-align: right;
    line-height: 23px;
    color: #dedede;
    flex: none;
}

.fld {
    width: 131px;
    height: 23px;
    margin-left: 22px;
    background: #545454;
    border-radius: 4px;
    display: flex;
    align-items: center;
    position: relative;
    overflow: hidden;
    flex: none;
}

.fld.drop {
    padding: 0 3px 0 10px;
    justify-content: space-between;
    color: #dedede;
}

.fld.drop .sock { margin-right: 6px; }

.val {
    width: 106px;
    text-align: center;
    color: #0c0c0c;
    position: relative;
    text-shadow: none;
}

.fld.dark { background: #5a5a5a; }

.fld.dark .val {
    background: #2a2a2a;
    color: #eaeaea;
    line-height: 23px;
}

.fill {
    position: absolute;
    left: 0;
    top: 0;
    height: 23px;
    background: #c2c2c2;
}

.color {
    width: 53px;
    height: 23px;
    background: #e6e6e6;
}

.alpha {
    width: 53px;
    height: 23px;
    background: repeating-conic-gradient(#7f7f7f 0 25%, #ababab 0 50%) 0 0 / 16px 16px;
}

.fld-end {
    width: 25px;
    height: 23px;
    background: #5a5a5a;
    border-left: 1px solid #434343;
    display: flex;
    align-items: center;
    justify-content: center;
    position: absolute;
    right: 0;
    top: 0;
}

.sock {
    width: 8px;
    height: 8px;
    border: 1.500px solid #e4e4e4;
    border-radius: 50%;
    display: block;
    flex: none;
}

.row-group { margin-bottom: 8px; }
.row-group .row { margin-bottom: 2px; }
.row-group .row:last-child { margin-bottom: 0; }

/* status bar */
.statusbar {
    height: 26px;
    flex: none;
    background: #2e2e2e;
    border-top: 1px solid #232323;
    display: flex;
    align-items: center;
    padding-left: 15px;
    color: #a8a8a8;
}

.mouse {
    width: 14px;
    height: 20px;
    color: #c4c4c4;
}

.mouse.mid { margin-left: 258px; }
.mouse.right { margin-left: 297px; }

.status-label { margin-left: 13px; }

.status-info {
    margin-left: auto;
    margin-right: 42px;
    white-space: nowrap;
    letter-spacing: -0.2px;
}

/* annotations */
.mark {
    position: absolute;
    border: 7px solid #fb3a3a;
}

.box-cube { left: 1584px; top: 161px; width: 332px; height: 45px; }
.box-base { left: 1668px; top: 442px; width: 241px; height: 50px; }
.box-sub { left: 1660px; top: 581px; width: 254px; height: 50px; }

.badge {
    position: absolute;
    width: 26px;
    height: 26px;
    border-radius: 50%;
    background: #fb3a3a;
    color: #fff;
    font-family: "Noto Sans", sans-serif;
    font-size: 14px;
    line-height: 26px;
    text-align: center;
}

.badge-1 { left: 1550px; top: 216px; }
.badge-2 { left: 1571px; top: 508px; }

.tip {
    position: absolute;
    background: rgba(22, 22, 22, 0.88);
    color: #fff;
    font-family: "Noto Sans CJK SC", sans-serif;
    font-size: 20px;
    line-height: 28px;
    white-space: nowrap;
}

.tip-1 {
    left: 1587px;
    top: 208px;
    width: 204px;
    height: 43px;
    padding: 7px 0 0 8px;
}

.tip-2 {
    left: 1609px;
    top: 501px;
    width: 311px;
    height: 70px;
    padding: 7px 0 0 8px;
}

.tip-arrow {
    position: absolute;
    left: 1582px;
    top: 225px;
    width: 8px;
    height: 8px;
    background: #1a1a1a;
    transform: rotate(45deg);
}

.meter {
    position: absolute;
    left: 1907px;
    top: 945px;
    width: 10px;
    height: 73px;
    background: #161616;
    border: 1px solid #777;
    border-radius: 5px;
    display: flex;
    flex-direction: column;
    justify-content: flex-end;
    gap: 1.500px;
    padding: 0 1px 3px;
}

.meter i {
    display: block;
    height: 2px;
    background: #35d25f;
}
```

FILE: viewport.js
```js
// floor grid of the 3d view, two sets of lines toward their vanishing points
var origin = [1180, 549];
var vanishX = [775, 150];
var vanishY = [3112, 150];
var floor = document.getElementById('floor');

function addLine(x1, y1, x2, y2) {
    var line = document.createElementNS('http://www.w3.org/2000/svg', 'line');
    line.setAttribute('x1', x1);
    line.setAttribute('y1', y1);
    line.setAttribute('x2', x2);
    line.setAttribute('y2', y2);
    floor.appendChild(line);
}

function onAxis(v, t, k) {
    var s = t / (t + k);
    return [origin[0] + (v[0] - origin[0]) * s, origin[1] + (v[1] - origin[1]) * s];
}

// lines running along Y, one for each step on the X axis
for (var t = -7; t < 24; t++) {
    var p = onAxis(vanishX, t, 8);
    var slope = (vanishY[1] - p[1]) / (vanishY[0] - p[0]);
    addLine(773, p[1] + (773 - p[0]) * slope, 1587, p[1] + (1587 - p[0]) * slope);
}

// lines running along X
for (var u = -19; u < 30; u++) {
    var q = onAxis(vanishY, u, 20);
    var back = (1100 - vanishX[1]) / (q[1] - vanishX[1]);
    addLine(vanishX[0], vanishX[1], vanishX[0] + (q[0] - vanishX[0]) * back, 1100);
}
```
